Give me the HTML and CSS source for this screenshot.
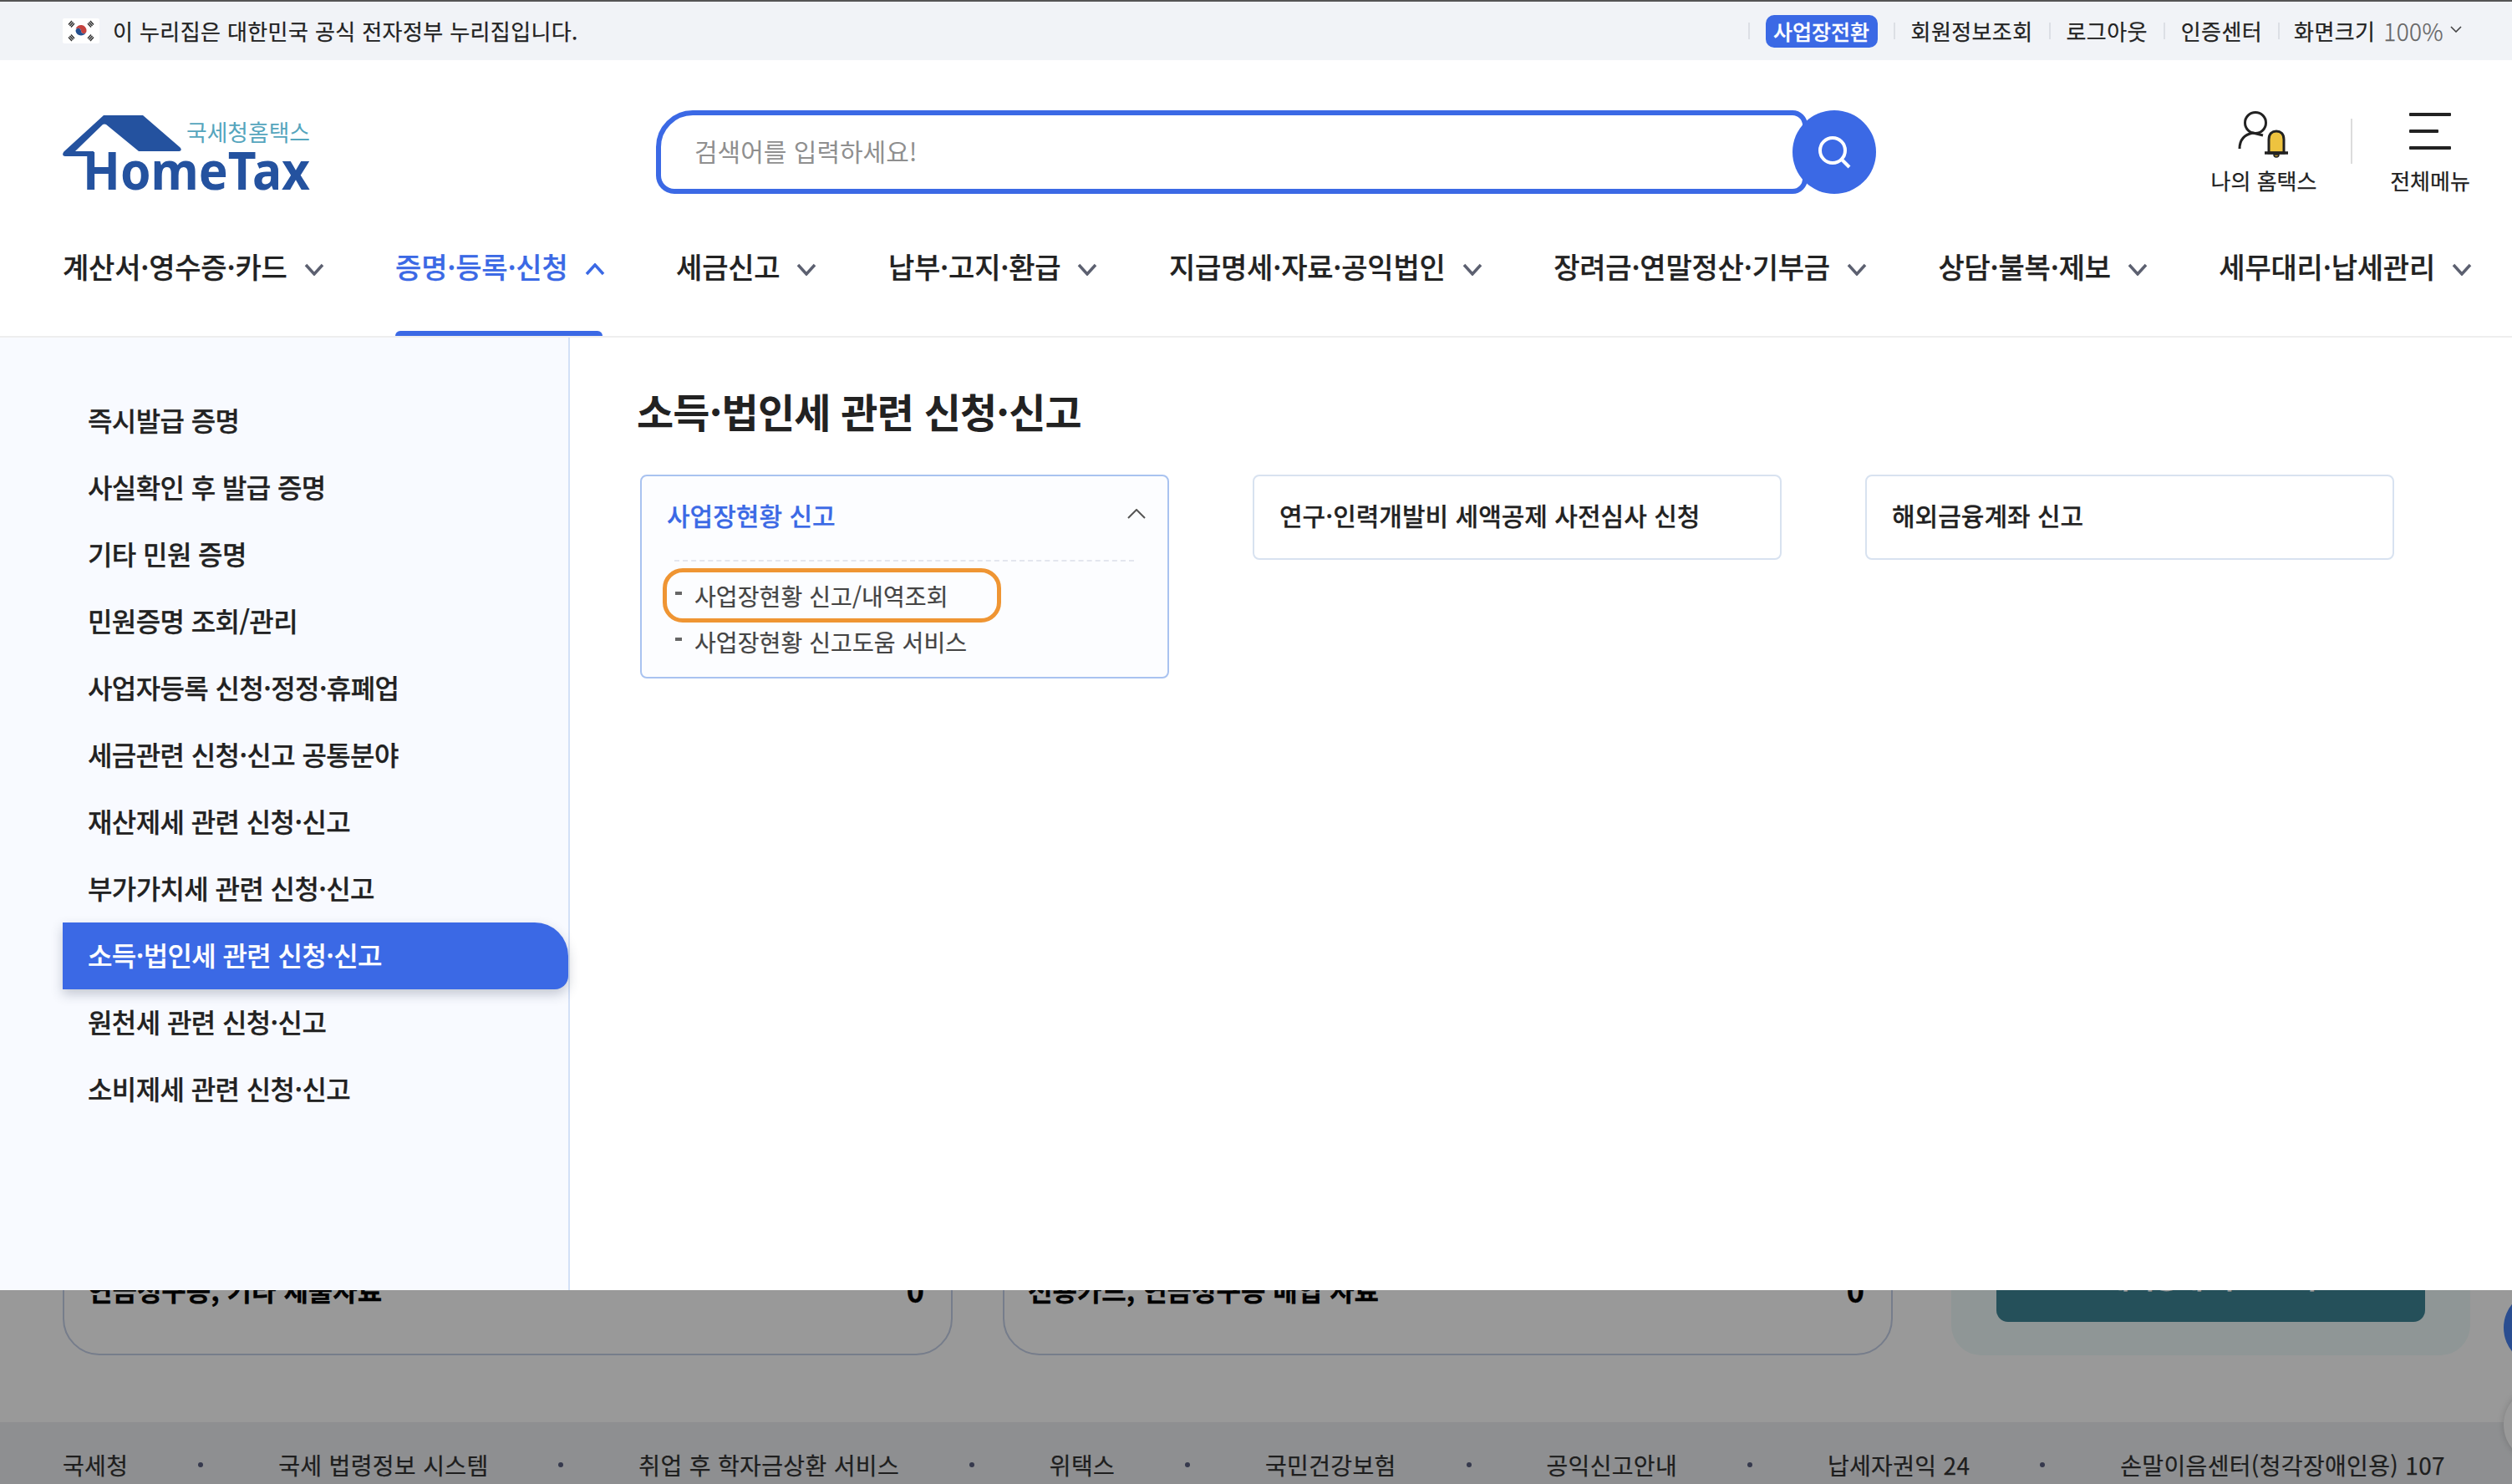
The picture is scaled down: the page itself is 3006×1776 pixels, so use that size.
FILE: index.html
```html
<!DOCTYPE html>
<html lang="ko">
<head>
<meta charset="utf-8">
<title>국세청 홈택스</title>
<link rel="stylesheet" href="styles.css">
</head>
<body>
<div class="page">
  <div class="top">
    <div class="gov">
      <svg class="flag" viewBox="0 0 44 30" aria-hidden="true">
        <rect width="44" height="30" rx="2" fill="#fff"/>
        <path d="M15.500 13a6.600 6.600 0 0 1 13 2c0 1.800-1.500 3.200-3.300 3.200s-3.200-1.400-3.200-3.200-1.500-3.200-3.300-3.200-3.200 1.200-3.200 1.200z" fill="#c4423f"/>
        <path d="M28.500 15a6.600 6.600 0 0 1-13 0c0-1.800 1.500-3.200 3.200-3.200s3.300 1.400 3.300 3.200 1.400 3.200 3.200 3.200 3.300-1.400 3.300-3.200z" fill="#24508f"/>
        <g stroke="#333" stroke-width="1.500" fill="none">
          <path d="M7 7.500l4-4.500M8.500 9l4-4.500M10 10.500l4-4.500"/>
          <path d="M30 6l4 4.500M31.500 4.500l4 4.500M33 3l4 4.500"/>
          <path d="M7 22.500l4 4.500M8.500 21l4 4.500M10 19.500l4 4.500"/>
          <path d="M30 24l4-4.500M31.500 25.500l4-4.500M33 27l4-4.500"/>
        </g>
      </svg>
      <span>이 누리집은 대한민국 공식 전자정부 누리집입니다.</span>
    </div>
    <div class="util">
      <i class="sep"></i>
      <a class="switch">사업장전환</a>
      <i class="sep"></i>
      <a>회원정보조회</a>
      <i class="sep"></i>
      <a>로그아웃</a>
      <i class="sep"></i>
      <a>인증센터</a>
      <i class="sep"></i>
      <a class="zoom">화면크기 <span class="pct">100%</span>
        <svg class="zoom-ico" viewBox="0 0 14 8" aria-hidden="true"><path d="M1 1l6 6 6-6" fill="none" stroke="#444" stroke-width="1.600"/></svg>
      </a>
    </div>
  </div>

  <header class="head">
    <div class="brand">
      <svg class="logo" viewBox="0 0 300 96" aria-label="국세청홈택스 HomeTax">
        <path d="M49 1h47l44 38c3 3 2 5-2 5H91L52 12q-2-1-4 0L15 44h22v6H3c-3 0-4-3-1-6z" fill="#24529f"/>
        <text class="logo-ko" x="148" y="32" textLength="148" lengthAdjust="spacingAndGlyphs">국세청홈택스</text>
        <text class="logo-en" x="24" y="90" textLength="272" lengthAdjust="spacingAndGlyphs">HomeTax</text>
      </svg>
    </div>
    <div class="search">
      <div class="search-box"><span class="ph">검색어를 입력하세요!</span></div>
      <div class="search-btn">
        <svg viewBox="0 0 44 44" aria-hidden="true"><circle cx="20" cy="20" r="15" fill="none" stroke="#fff" stroke-width="4"/><path d="M31 31l9 9" stroke="#fff" stroke-width="4" fill="none"/></svg>
      </div>
    </div>
    <div class="tools">
      <div class="tool my">
        <svg viewBox="0 0 68 60" aria-hidden="true">
          <ellipse cx="24" cy="14" rx="12.500" ry="12.500" fill="#fff" stroke="#222" stroke-width="3"/>
          <path d="M5 45c0-11 6-17 16-19l12 3" fill="none" stroke="#222" stroke-width="3"/>
          <path d="M40 50V34c0-7 4-10 9-10s9 3 9 10v16z" fill="#eec33f" stroke="#222" stroke-width="3"/>
          <path d="M35 50h28" stroke="#222" stroke-width="3.500"/>
          <path d="M46 52c0 4 6 4 6 0z" fill="#c9a031" stroke="#222" stroke-width="1.500"/>
        </svg>
        <span>나의 홈택스</span>
      </div>
      <i class="tool-sep"></i>
      <div class="tool all">
        <div class="burger"><b></b><b class="mid"></b><b></b></div>
        <span>전체메뉴</span>
      </div>
    </div>
  </header>

  <nav class="nav">
    <a class="nav-item">계산서·영수증·카드<svg class="chev" viewBox="0 0 24 15"><path d="M2 2l10 11L22 2"/></svg></a>
    <a class="nav-item on">증명·등록·신청<svg class="chev" viewBox="0 0 24 15"><path d="M2 13L12 2l10 11"/></svg></a>
    <a class="nav-item">세금신고<svg class="chev" viewBox="0 0 24 15"><path d="M2 2l10 11L22 2"/></svg></a>
    <a class="nav-item">납부·고지·환급<svg class="chev" viewBox="0 0 24 15"><path d="M2 2l10 11L22 2"/></svg></a>
    <a class="nav-item">지급명세·자료·공익법인<svg class="chev" viewBox="0 0 24 15"><path d="M2 2l10 11L22 2"/></svg></a>
    <a class="nav-item">장려금·연말정산·기부금<svg class="chev" viewBox="0 0 24 15"><path d="M2 2l10 11L22 2"/></svg></a>
    <a class="nav-item">상담·불복·제보<svg class="chev" viewBox="0 0 24 15"><path d="M2 2l10 11L22 2"/></svg></a>
    <a class="nav-item">세무대리·납세관리<svg class="chev" viewBox="0 0 24 15"><path d="M2 2l10 11L22 2"/></svg></a>
  </nav>

  <div class="back">
    <main class="dash">
      <section class="stat"><strong>연금청구증, 기타 제출자료</strong><em>0</em></section>
      <section class="stat"><strong>전용카드, 연금청구증 매입 자료</strong><em>0</em></section>
      <aside class="promo"><a class="promo-btn">세액공제 자료 조회</a></aside>
    </main>
    <footer class="foot">
      <a>국세청</a><i></i>
      <a>국세 법령정보 시스템</a><i></i>
      <a>취업 후 학자금상환 서비스</a><i></i>
      <a>위택스</a><i></i>
      <a>국민건강보험</a><i></i>
      <a>공익신고안내</a><i></i>
      <a>납세자권익 24</a><i></i>
      <a>손말이음센터(청각장애인용) 107</a>
    </footer>
    <div class="float-blue"></div>
    <div class="float-white"></div>
    <div class="dim"></div>
  </div>

  <div class="mega">
    <ul class="side">
      <li>즉시발급 증명</li>
      <li>사실확인 후 발급 증명</li>
      <li>기타 민원 증명</li>
      <li>민원증명 조회/관리</li>
      <li>사업자등록 신청·정정·휴폐업</li>
      <li>세금관련 신청·신고 공통분야</li>
      <li>재산제세 관련 신청·신고</li>
      <li>부가가치세 관련 신청·신고</li>
      <li class="cur">소득·법인세 관련 신청·신고</li>
      <li>원천세 관련 신청·신고</li>
      <li>소비제세 관련 신청·신고</li>
    </ul>
    <div class="detail">
      <h2>소득·법인세 관련 신청·신고</h2>
      <div class="cards">
        <div class="card open">
          <div class="card-head">
            <span>사업장현황 신고</span>
            <svg viewBox="0 0 22 12" aria-hidden="true"><path d="M1 11L11 1l10 10" fill="none" stroke="#555" stroke-width="2"/></svg>
          </div>
          <ul class="sub">
            <li class="mark">사업장현황 신고/내역조회</li>
            <li>사업장현황 신고도움 서비스</li>
          </ul>
        </div>
        <div class="card"><div class="card-head plain"><span>연구·인력개발비 세액공제 사전심사 신청</span></div></div>
        <div class="card"><div class="card-head plain"><span>해외금융계좌 신고</span></div></div>
      </div>
    </div>
  </div>
</div>
</body>
</html>
```
FILE: styles.css
```css
*, *::before, *::after { box-sizing: border-box; }
html, body { margin: 0; height: 100%; overflow: hidden; background: #fff; }
body { font-family: "Noto Sans CJK KR", "Noto Sans", sans-serif; color: #222; -webkit-text-stroke: .25px; }
a { color: inherit; text-decoration: none; }
ul { list-style: none; margin: 0; padding: 0; }
i { display: block; }

.page { position: relative; width: 3006px; height: 1776px; display: flex; flex-direction: column; overflow: hidden; }

/* top strip */
.top { height: 72px; flex: none; border-top: 2px solid #555; background: #f1f3f7; display: flex; align-items: center; justify-content: space-between; padding: 0 60px 0 75px; font-size: 26px; line-height: 1; letter-spacing: .4px; }
.gov { display: flex; align-items: center; gap: 16px; }
.flag { width: 44px; height: 30px; }
.util { display: flex; align-items: center; }
.sep { width: 2px; height: 20px; background: #dcdfe5; margin: 0 19px; }
.sep:first-child { margin-left: 0; }
.switch { width: 134px; height: 39px; border-radius: 10px; background: #3b69e5; color: #fff; font-weight: 500; font-size: 25px; letter-spacing: 0; display: flex; align-items: center; justify-content: center; }
.zoom { display: flex; align-items: center; gap: 8px; margin-left: -2px; }
.pct { color: #666; font-weight: 300; font-size: 28px; margin-left: 2px; }
.zoom-ico { width: 14px; height: 8px; margin-top: -4px; }

/* header row */
.head { height: 220px; flex: none; display: flex; align-items: center; padding-left: 75px; background: #fff; }
.brand { width: 710px; flex: none; }
.logo { display: block; width: 300px; height: 96px; margin-top: 6px; overflow: visible; }
.logo-ko { font-size: 27px; fill: #55a5bd; stroke-width: 0; font-family: "Noto Sans CJK KR", sans-serif; }
.logo-en { font-size: 62px; font-weight: 700; fill: #24529f; stroke-width: 0; font-family: "Noto Sans", sans-serif; }

.search { position: relative; width: 1460px; height: 100px; flex: none; display: flex; }
.search-box { width: 1379px; height: 100px; border: 6px solid #3b69e5; border-radius: 44px 18px 18px 22px; display: flex; align-items: flex-start; padding: 16px 0 0 40px; }
.ph { font-size: 30px; line-height: 52px; color: #8f8f8f; -webkit-text-stroke: 0; }
.search-btn { width: 100px; height: 100px; margin-left: -18px; border-radius: 50%; background: #3b69e5; display: flex; align-items: center; justify-content: center; position: relative; }
.search-btn svg { width: 44px; height: 44px; }

.tools { flex: 1; display: flex; align-items: flex-start; height: 104px; }
.tool { display: flex; flex-direction: column; align-items: center; font-size: 26px; line-height: 32px; }
.my { width: 130px; margin-left: 399px; }
.my svg { width: 68px; height: 60px; margin-top: 3px; margin-bottom: 7px; }
.tool-sep { width: 2px; height: 54px; background: #dcdcdc; margin: 12px 45px 0 39px; }
.all { width: 96px; }
.burger { width: 50px; height: 60px; padding-top: 5px; margin-bottom: 10px; display: flex; flex-direction: column; gap: 16px; }
.burger b { display: block; height: 4px; width: 50px; background: #222; border-radius: 1px; }
.burger b.mid { width: 35px; }

/* main nav */
.nav { height: 112px; flex: none; display: flex; justify-content: space-between; padding: 0 48px 0 75px; border-bottom: 2px solid #eee; background: #fff; }
.nav-item { position: relative; height: 110px; display: flex; align-items: flex-start; font-size: 34px; letter-spacing: -.2px; line-height: 54px; font-weight: 500; color: #222; }
.chev { width: 24px; height: 15px; margin: 23px 0 0 20px; }
.chev path { fill: none; stroke: #5c6070; stroke-width: 3.500; }
.on { color: #3b69e5; }
.on .chev path { stroke: #3b69e5; }
.on::after { content: ""; position: absolute; left: 0; right: 3px; bottom: 0; height: 6px; border-radius: 6px 6px 0 0; background: #3b69e5; }

/* page underneath the open menu */
.back { position: relative; flex: 1; display: flex; flex-direction: column; background: #fff; }
.dash { flex: 1; display: flex; align-items: flex-end; padding: 0 50px 80px 75px; }
.stat { width: 1065px; height: 160px; margin-right: 60px; border: 2px solid #c5d0e8; border-radius: 0 0 44px 44px; display: flex; justify-content: space-between; padding: 56px 32px 0 28px; font-size: 32px; line-height: 46px; color: #000; }
.stat strong { font-weight: 700; }
.stat em { font-style: normal; font-weight: 700; font-size: 36px; }
.stat:nth-child(2) { margin-right: 0; }
.promo { width: 621px; height: 160px; margin-left: 70px; background: #eefbfa; border-radius: 0 0 36px 36px; padding: 0 54px; }
.promo-btn { display: block; height: 120px; background: #3f8696; border-radius: 0 0 14px 14px; color: #fff; text-align: center; font-size: 32px; padding-top: 46px; line-height: 40px; font-weight: 700; }
.foot { height: 74px; flex: none; background: #edeff2; display: flex; align-items: center; justify-content: space-between; padding: 42px 80px 14px 75px; font-size: 28px; line-height: 1; letter-spacing: .35px; color: #333; }
.foot i { width: 6px; height: 6px; margin: 0 3px 0 -3px; border-radius: 50%; background: #5a6080; }
.float-blue { position: absolute; left: 2996px; top: 1140px; width: 90px; height: 90px; border-radius: 50%; background: #4681f0; }
.float-white { position: absolute; left: 2996px; top: 1256px; width: 90px; height: 90px; border-radius: 50%; background: #fff; box-shadow: 0 0 8px rgba(0, 0, 0, .18); }
.dim { position: absolute; inset: 0; background: rgba(0, 0, 0, .4); }

/* open dropdown */
.mega { position: absolute; left: 0; top: 404px; width: 100%; height: 1140px; display: flex; background: #fff; }
.side { width: 682px; flex: none; padding: 60px 0 0 75px; background: #f8faff; border-right: 2px solid #d3e0f7; }
.side li { height: 80px; padding-left: 30px; font-size: 32px; letter-spacing: -.6px; line-height: 76px; font-weight: 500; color: #222; }
.side .cur { background: #3b69e5; color: #fff; border-radius: 0 40px 16px 0; box-shadow: 0 6px 14px rgba(40, 50, 80, .25); }
.detail { flex: 1; padding: 52px 0 0 84px; }
.detail h2 { margin: 0 0 42px -4px; font-size: 48px; letter-spacing: -.8px; line-height: 70px; font-weight: 700; color: #222; -webkit-text-stroke: 0; }
.cards { display: flex; align-items: flex-start; gap: 100px; }
.card { width: 633px; border: 2px solid #d8e2f0; border-radius: 8px; background: #fff; }
.card.open { border-color: #a9c3f0; background: #fcfdff; }
.card-head { height: 98px; padding: 0 40px 6px 30px; display: flex; align-items: center; justify-content: space-between; font-size: 30px; font-weight: 500; color: #222; }
.open .card-head { height: 100px; color: #3b69e5; margin: 0 26px 0 0; padding: 0 0 8px 30px; }
.card-head svg { width: 22px; height: 12px; margin-top: -2px; }
.sub { margin: 0 40px 0 39px; border-top: 2px dashed #e3e6ee; padding: 14px 0 14px; position: relative; }
.sub li { position: relative; height: 55px; line-height: 55px; padding-left: 24px; font-size: 28px; letter-spacing: .1px; color: #444; }
.sub li::before { content: ""; position: absolute; left: 1px; top: 22px; width: 8px; height: 4px; background: #666; }
.mark::after { content: ""; position: absolute; left: -14px; top: -6px; width: 405px; height: 65px; border: 5px solid #ef9533; border-radius: 24px; }
```
